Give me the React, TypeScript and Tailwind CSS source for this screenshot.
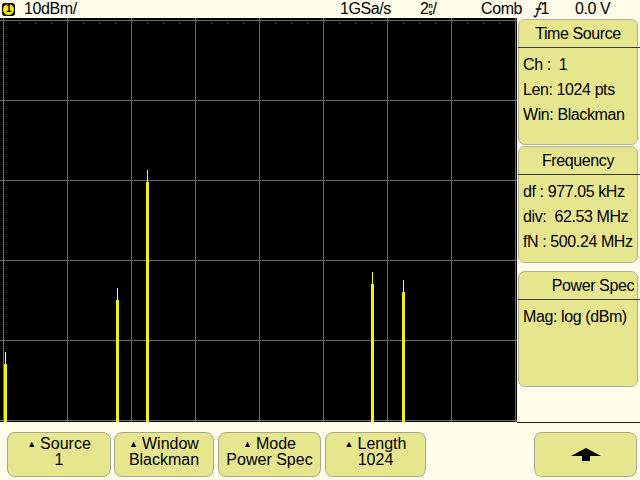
import React from "react";

const font = { fontFamily: '"Liberation Sans", Arial, sans-serif' };

function Screen() {
  const W = 517;
  const H = 404;
  const vlines = [3, 67, 131, 195, 259, 323, 387, 451, 515];
  const hlines = [2, 82, 162, 242, 322, 402];
  const ticksX: number[] = [];
  for (let x = 3; x < 515; x += 16) ticksX.push(x);
  const ticksY: number[] = [];
  for (let y = 2; y < 402; y += 8) ticksY.push(y);
  const peaks = [
    { x: 4, top: 334 },
    { x: 116, top: 270 },
    { x: 146, top: 152 },
    { x: 371, top: 254 },
    { x: 402, top: 262 },
  ];
  return (
    <svg width={W} height={H} className="block">
      <rect x={0} y={0} width={W} height={H} fill="#000" />
      {vlines.map((x) => (
        <line key={"v" + x} x1={x + 0.5} y1={0} x2={x + 0.5} y2={H} stroke="#6a6a6a" strokeWidth={1} />
      ))}
      {hlines.map((y) => (
        <line key={"h" + y} x1={0} y1={y + 0.5} x2={W} y2={y + 0.5} stroke="#6a6a6a" strokeWidth={1} />
      ))}
      {ticksX.map((x) => (
        <rect key={"tx" + x} x={x} y={5} width={1} height={1} fill="#5a5a5a" />
      ))}
      {ticksY.map((y) => (
        <rect key={"ty" + y} x={6} y={y} width={1} height={1} fill="#5a5a5a" />
      ))}
      {peaks.map((p) => (
        <g key={p.x}>
          <rect x={p.x + 1} y={p.top} width={1} height={H - p.top} fill="#ffff20" />
          <rect x={p.x} y={p.top + 12} width={3} height={H - p.top - 12} fill="#f4f400" />
        </g>
      ))}
    </svg>
  );
}

function Panel({ title, lines, h, right }: { title: string; lines: string[]; h: string; right?: boolean }) {
  return (
    <div className={`relative ${h} w-[120px] rounded-[7px] border border-[#b0b09a] bg-[#e6e68e] ml-[1px]`}>
      <div className={`h-[27px] flex items-center ${right ? "justify-end pr-[3px]" : "justify-center"} text-[16px] tracking-tight text-black`}>
        {title}
      </div>
      <div className="absolute left-[-1px] right-[-4px] top-[27px] h-px bg-[#3a3a3a]" />
      <div className="pt-[8px] pl-[4px] flex flex-col gap-[6px] text-[16px] leading-[19px] tracking-tight text-black whitespace-pre">
        {lines.map((l) => (
          <div key={l}>{l}</div>
        ))}
      </div>
    </div>
  );
}

function Btn({ top, bottom, w, ml }: { top: string; bottom: string; w: string; ml: string }) {
  return (
    <div className={`${w} ${ml} h-[45px] rounded-[8px] border border-[#a8a890] bg-[#e6e68e] flex flex-col items-center pt-[3px] text-[16px] leading-[16px] text-black`}>
      <div className="flex items-center gap-[4px]">
        <span className="text-[9px] leading-none">▲</span>
        <span>{top}</span>
      </div>
      <div>{bottom}</div>
    </div>
  );
}

export default function App() {
  return (
    <div className="w-[640px] h-[480px] bg-[#fffcea] overflow-hidden flex flex-col" style={font}>
      <div className="h-[18px] flex items-center text-[16px] tracking-tight text-black whitespace-nowrap">
        <div className="w-[24px] flex">
          <div className="ml-[2px] w-[13px] h-[13px] rounded-[3px] bg-black flex items-center justify-center">
            <div className="w-[11px] h-[11px] rounded-full bg-[#f0f000] flex items-center justify-center text-[10px] font-bold leading-none text-black">1</div>
          </div>
        </div>
        <span className="w-[316px]">10dBm/</span>
        <span className="w-[80px]">1GSa/s</span>
        <span className="w-[61px] flex items-center">
          2
          <span className="flex flex-col text-[7px] leading-[7px] font-bold">
            <span>n</span>
            <span>s</span>
          </span>
          <span>/</span>
        </span>
        <span className="w-[52px]">Comb</span>
        <span className="w-[42px]">
          <span className="italic">⨍</span>1
        </span>
        <span>0.0 V</span>
      </div>
      <div className="flex h-[404px]">
        <Screen />
        <div className="flex flex-col pt-[1px]">
          <Panel h="h-[126px]" title="Time Source" lines={["Ch :  1", "Len: 1024 pts", "Win: Blackman"]} />
          <div className="h-[1px]" />
          <Panel h="h-[117px]" title="Frequency" lines={["df : 977.05 kHz", "div:  62.53 MHz", "fN : 500.24 MHz"]} />
          <div className="h-[8px]" />
          <Panel h="h-[116px]" title="Power Spec" lines={["Mag: log (dBm)"]} right />
        </div>
      </div>
      <div className="h-px w-full flex">
        <div className="w-[517px]" />
        <div className="flex-1 bg-[#202020]" />
      </div>
      <div className="flex items-start mt-[9px]">
        <Btn w="w-[104px]" ml="ml-[7px]" top="Source" bottom="1" />
        <Btn w="w-[100px]" ml="ml-[3px]" top="Window" bottom="Blackman" />
        <Btn w="w-[103px]" ml="ml-[4px]" top="Mode" bottom="Power Spec" />
        <Btn w="w-[101px]" ml="ml-[4px]" top="Length" bottom="1024" />
        <div className="ml-[108px] w-[103px] h-[45px] rounded-[8px] border border-[#a8a890] bg-[#e6e68e] flex items-center justify-center">
          <svg width="30" height="14" viewBox="0 0 30 14">
            <polygon points="15,0 30,8 19,8 19,13 11,13 11,8 0,8" fill="#000" />
          </svg>
        </div>
      </div>
    </div>
  );
}
